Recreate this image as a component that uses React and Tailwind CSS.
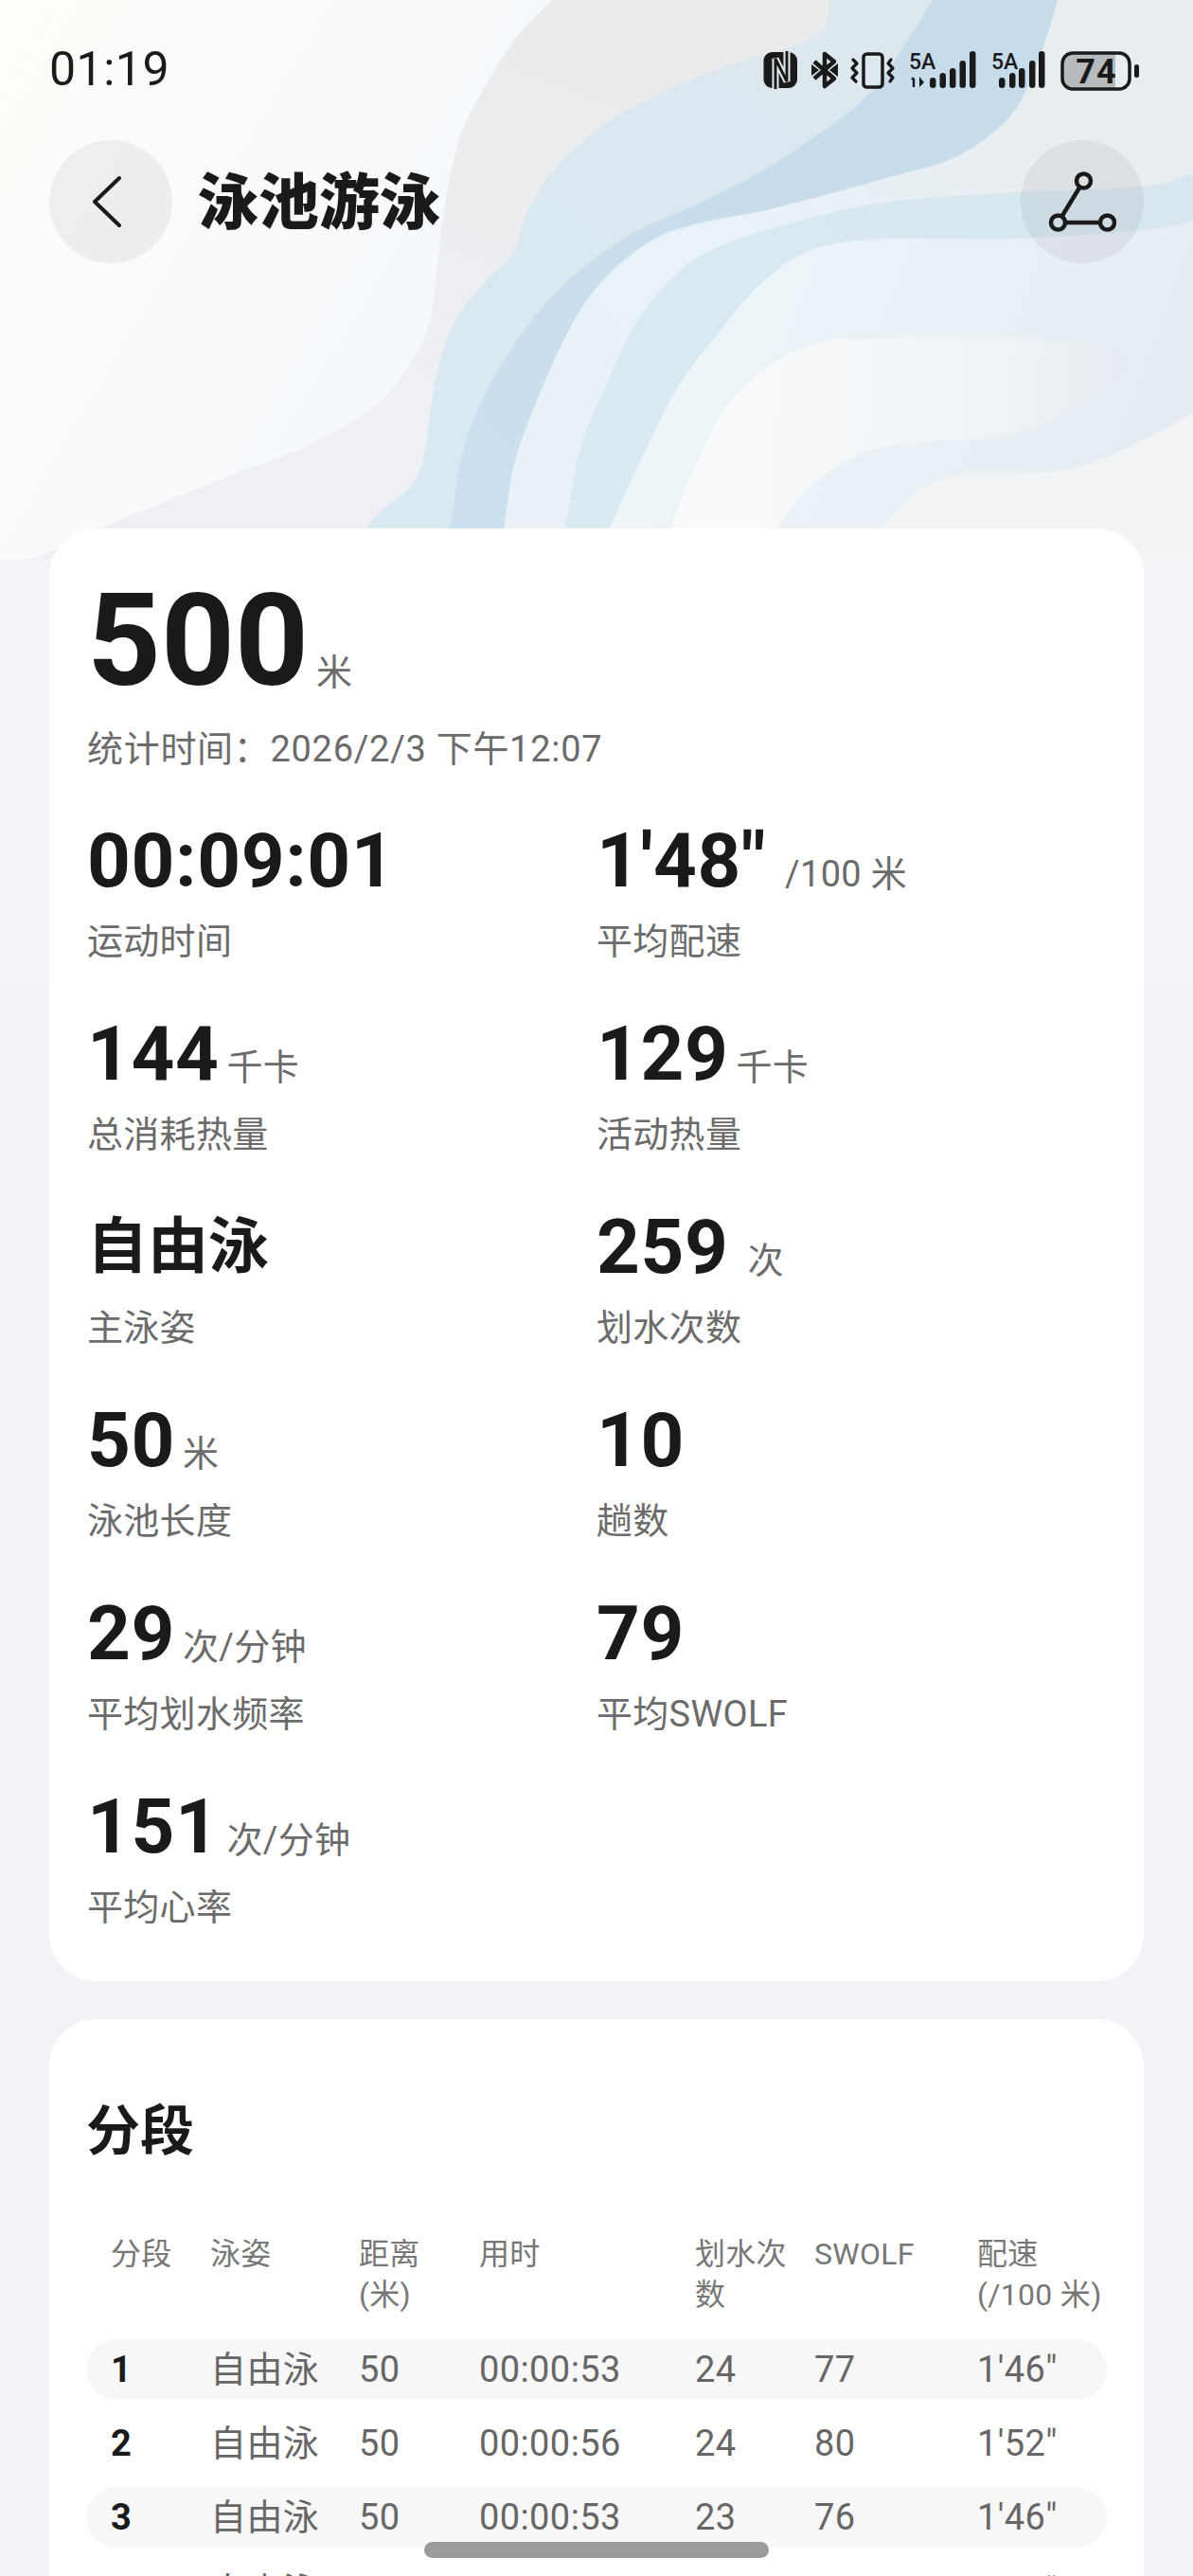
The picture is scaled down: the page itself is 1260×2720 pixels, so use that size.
import React from 'react';

const stats = [
  { value: '00:09:01', label: '运动时间' },
  { value: '1\'48"', unit: '/100 米', wide: true, label: '平均配速' },
  { value: '144', unit: '千卡', label: '总消耗热量' },
  { value: '129', unit: '千卡', label: '活动热量' },
  { value: '自由泳', label: '主泳姿', cjk: true },
  { value: '259', unit: '次', wide: true, label: '划水次数' },
  { value: '50', unit: '米', label: '泳池长度' },
  { value: '10', label: '趟数' },
  { value: '29', unit: '次/分钟', label: '平均划水频率' },
  { value: '79', label: '平均SWOLF' },
  { value: '151', unit: '次/分钟', label: '平均心率' },
];

const headers = [['分段'], ['泳姿'], ['距离', '(米)'], ['用时'], ['划水次', '数'], ['SWOLF'], ['配速', '(/100 米)']];

const laps = [
  ['1', '自由泳', '50', '00:00:53', '24', '77', '1\'46"'],
  ['2', '自由泳', '50', '00:00:56', '24', '80', '1\'52"'],
  ['3', '自由泳', '50', '00:00:53', '23', '76', '1\'46"'],
  ['4', '自由泳', '50', '00:00:54', '24', '78', '1\'48"'],
];

// catmull-rom through the points, so the wave edges stay soft
function smooth(pts) {
  let d = `M${pts[0][0]} ${pts[0][1]}`;
  for (let i = 0; i < pts.length - 1; i++) {
    const p0 = pts[i - 1] || pts[i];
    const p1 = pts[i];
    const p2 = pts[i + 1];
    const p3 = pts[i + 2] || p2;
    const c1x = p1[0] + (p2[0] - p0[0]) / 6;
    const c1y = p1[1] + (p2[1] - p0[1]) / 6;
    const c2x = p2[0] - (p3[0] - p1[0]) / 6;
    const c2y = p2[1] - (p3[1] - p1[1]) / 6;
    d += ` C${c1x} ${c1y} ${c2x} ${c2y} ${p2[0]} ${p2[1]}`;
  }
  return d;
}

const fromTop = ' L1260 620 L1260 0 Z';
const fromSide = ' L1260 620 Z';

const grayEdge = [[583, 0], [545, 40], [513, 90], [485, 147], [468, 227], [462, 280], [455, 333], [440, 373], [400, 425], [333, 467], [267, 493], [200, 520], [90, 565], [0, 610], [0, 620]];
const blueEdge = [[876, 0], [862, 38], [767, 70], [700, 97], [640, 130], [587, 177], [557, 223], [542, 267], [513, 297], [480, 340], [460, 400], [442, 500], [395, 547], [335, 620]];
const deepEdge = [[985, 0], [960, 40], [920, 97], [867, 140], [800, 183], [733, 217], [667, 247], [607, 290], [560, 340], [517, 407], [490, 473], [475, 560], [467, 620]];
const paleEdge = [[1117, 0], [1105, 40], [1083, 97], [1057, 133], [1007, 167], [940, 187], [817, 220], [733, 237], [683, 257], [633, 300], [600, 350], [567, 423], [543, 490], [532, 560], [524, 620]];
const stripEdge = [[1260, 183], [1207, 197], [1073, 203], [940, 213], [857, 230], [767, 257], [717, 287], [673, 340], [640, 407], [613, 473], [597, 560], [588, 620]];
const lightEdge = [[1260, 233], [1207, 243], [1073, 252], [920, 253], [850, 267], [800, 303], [760, 350], [717, 407], [683, 473], [643, 560], [622, 620]];
const whiteEdge = [[690, 620], [717, 533], [740, 480], [767, 430], [807, 390], [860, 363], [920, 358], [1073, 357], [1190, 372], [1157, 417], [1073, 457], [973, 467], [907, 480], [840, 530], [790, 620]];
const lowEdge = [[1260, 437], [1140, 493], [1023, 500], [973, 517], [927, 560], [880, 620]];

function HeroBackground() {
  return (
    <svg className="absolute left-0 top-0" width="1260" height="1040" viewBox="0 0 1260 1040">
      <defs>
        <linearGradient id="base" gradientUnits="userSpaceOnUse" x1="0" y1="0" x2="560" y2="340">
          <stop offset="0" stopColor="#fffef8" />
          <stop offset="0.25" stopColor="#fbfbfa" />
          <stop offset="1" stopColor="#f4f8fc" />
        </linearGradient>
        <linearGradient id="gray" gradientUnits="userSpaceOnUse" x1="560" y1="60" x2="420" y2="420">
          <stop offset="0" stopColor="#e9ebed" />
          <stop offset="1" stopColor="#eff0f3" />
        </linearGradient>
        <linearGradient id="blue" gradientUnits="userSpaceOnUse" x1="800" y1="60" x2="440" y2="540">
          <stop offset="0" stopColor="#dce7ee" />
          <stop offset="1" stopColor="#d8e9f2" />
        </linearGradient>
        <linearGradient id="deep" gradientUnits="userSpaceOnUse" x1="1000" y1="60" x2="500" y2="540">
          <stop offset="0" stopColor="#c6dcea" />
          <stop offset="1" stopColor="#cbe0ee" />
        </linearGradient>
        <linearGradient id="pale" gradientUnits="userSpaceOnUse" x1="1100" y1="120" x2="560" y2="540">
          <stop offset="0" stopColor="#e8edf0" />
          <stop offset="0.5" stopColor="#e9f2f8" />
          <stop offset="1" stopColor="#e9f1f6" />
        </linearGradient>
        <linearGradient id="strip" gradientUnits="userSpaceOnUse" x1="1200" y1="220" x2="620" y2="540">
          <stop offset="0" stopColor="#d8e6ee" />
          <stop offset="1" stopColor="#d9eaf3" />
        </linearGradient>
        <linearGradient id="light" gradientUnits="userSpaceOnUse" x1="760" y1="300" x2="1240" y2="480">
          <stop offset="0" stopColor="#eef5f9" />
          <stop offset="1" stopColor="#e4ebf2" />
        </linearGradient>
        <linearGradient id="white" gradientUnits="userSpaceOnUse" x1="760" y1="400" x2="1180" y2="420">
          <stop offset="0" stopColor="#f8fafc" />
          <stop offset="0.7" stopColor="#f0f3f5" />
          <stop offset="1" stopColor="#e6ecf2" />
        </linearGradient>
      </defs>
      <rect width="1260" height="1040" fill="url(#base)" />
      <path d={smooth(grayEdge) + fromTop} fill="url(#gray)" />
      <path d={smooth(blueEdge) + fromTop} fill="url(#blue)" />
      <path d={smooth(deepEdge) + fromTop} fill="url(#deep)" />
      <path d={smooth(paleEdge) + fromTop} fill="url(#pale)" />
      <path d={smooth(stripEdge) + fromSide} fill="url(#strip)" />
      <path d={smooth(lightEdge) + fromSide} fill="url(#light)" />
      <path d={smooth(whiteEdge) + ' Z'} fill="url(#white)" />
      <path d={smooth(lowEdge) + fromSide} fill="#f1f3f5" />
      <rect y="590" width="1260" height="450" fill="#f3f4f7" />
    </svg>
  );
}

function StatusIcons() {
  const tops = [82, 77, 72, 64, 54];
  const sim1 = [982, 992.5, 1003, 1013.5, 1024];
  const sim2 = [1055, 1066, 1076, 1087, 1097];
  return (
    <svg width="400" height="44" viewBox="805 53 400 44" className="block shrink-0" fill="#1a1a1a">
      {/* nfc */}
      <rect x="806.5" y="55" width="35.5" height="38" rx="9" />
      <path d="M819 94 V62 L831 86 V54" fill="none" stroke="#e3edf2" strokeWidth="7" />
      <path d="M819 94 V62 L831 86 V54" fill="none" stroke="#1a1a1a" strokeWidth="3" />
      {/* bluetooth */}
      <path d="M860 65 L881 83 L871 91 V57 L881 65 L860 83" fill="none" stroke="#1a1a1a" strokeWidth="4.5" strokeLinejoin="round" />
      <path d="M876 74 L885 67 V81 Z" />
      <path d="M857 68 L865 74 L857 80 Z" />
      {/* vibrate */}
      <rect x="912" y="57" width="20" height="35" rx="3.5" fill="none" stroke="#1a1a1a" strokeWidth="3.5" />
      <path d="M901 63 L905 67 L900 72 L905 77 L900 82 L904 86" fill="none" stroke="#1a1a1a" strokeWidth="3.2" strokeLinecap="round" strokeLinejoin="round" />
      <path d="M941 63 L938 67 L943 72 L938 77 L943 82 L940 86" fill="none" stroke="#1a1a1a" strokeWidth="3.2" strokeLinecap="round" strokeLinejoin="round" />
      {/* first sim */}
      <text x="960" y="73" fontFamily="Roboto, sans-serif" fontSize="23" fontWeight="500" fill="#1a1a1a">5A</text>
      <path d="M965 83 V92 M963 84 L965 82" fill="none" stroke="#1a1a1a" strokeWidth="2.4" />
      <path d="M971 81 V92 L976 87 Z" />
      {tops.map((top, i) => (
        <rect key={i} x={sim1[i]} y={top} width="6.5" height={93 - top} rx="3.2" />
      ))}
      {/* second sim */}
      <text x="1047" y="73" fontFamily="Roboto, sans-serif" fontSize="23" fontWeight="500" fill="#1a1a1a">5A</text>
      {tops.map((top, i) => (
        <rect key={i} x={sim2[i]} y={top} width="6.5" height={93 - top} rx="3.2" />
      ))}
      {/* battery */}
      <path d="M1132 56 H1178 V94 H1132 A10 10 0 0 1 1122 84 V66 A10 10 0 0 1 1132 56 Z" fill="#b6bbbe" />
      <rect x="1122" y="56" width="71" height="38" rx="11" fill="none" stroke="#1a1a1a" strokeWidth="3.5" />
      <rect x="1198" y="68" width="5" height="14" rx="2.5" />
      <text x="1158" y="88" textAnchor="middle" fontFamily="Roboto, sans-serif" fontSize="36" fontWeight="700" letterSpacing="1" fill="#1a1a1a">74</text>
    </svg>
  );
}

function Stat({ value, unit, label, cjk, wide }) {
  return (
    <div>
      <div className="flex h-[84px] items-baseline">
        <span className={`leading-[84px] font-bold text-[#1a1a1a] ${cjk ? 'text-[64px]' : 'text-[80px] tracking-[0.6px]'}`}>{value}</span>
        {unit && <span className={`text-[38px] tracking-[0.3px] text-[#6b6b6b] ${wide ? 'ml-5' : 'ml-2'}`}>{unit}</span>}
      </div>
      <div className="mt-[21px] text-[38px] leading-[44px] tracking-[0.3px] text-[#6b6b6b]">{label}</div>
    </div>
  );
}

export default function App() {
  return (
    <div className="relative h-[2720px] w-[1260px] overflow-hidden bg-[#f1f3f6] font-['Roboto','Noto_Sans_CJK_SC',sans-serif]">
      <HeroBackground />

      <div className="relative flex flex-col px-[52px]">
        {/* status bar */}
        <div className="flex h-[148px] items-start justify-between pt-[43px]">
          <span className="text-[50px] leading-[60px] tracking-[0.5px] text-[#1a1a1a]">01:19</span>
          <div className="mr-[3px] mt-[10px]"><StatusIcons /></div>
        </div>

        {/* header */}
        <div className="flex h-[130px] items-center justify-between">
          <div className="flex items-center">
            <button className="flex h-[130px] w-[130px] items-center justify-center rounded-full bg-black/5">
              <svg className="-ml-2" width="32" height="56" viewBox="0 0 32 56" fill="none" stroke="#1a1a1a" strokeWidth="4" strokeLinecap="round" strokeLinejoin="round">
                <path d="M29 3 L3 28 L29 53" />
              </svg>
            </button>
            <h1 className="ml-[27px] mt-1 text-[64px] leading-[80px] font-black text-[#1a1a1a]">泳池游泳</h1>
          </div>
          <button className="flex h-[130px] w-[130px] items-center justify-center rounded-full bg-black/5">
            <svg width="72" height="68" viewBox="0 0 72 68" fill="none" stroke="#1a1a1a" strokeWidth="4.5">
              <circle cx="37.5" cy="12" r="7.5" />
              <circle cx="10.5" cy="56" r="7.5" />
              <circle cx="62.5" cy="56" r="7.5" />
              <path d="M33.5 18.5 L14.5 49.5 M18 56 H55" />
            </svg>
          </button>
        </div>

        {/* summary card */}
        <div className="mt-[280px] h-[1534px] rounded-[50px] bg-white px-10 pt-[49px]">
          <div className="flex h-[140px] items-baseline">
            <span className="text-[136px] leading-[140px] font-bold text-[#1a1a1a]">500</span>
            <span className="ml-2 text-[38px] text-[#6b6b6b]">米</span>
          </div>
          <div className="mt-[22px] text-[38px] leading-[44px] tracking-[0.7px] text-[#6b6b6b]">统计时间：2026/2/3 下午12:07</div>

          <div className="mt-[54px] grid grid-cols-[538px_1fr] gap-y-[55px]">
            {stats.map((s) => (
              <Stat key={s.label} {...s} />
            ))}
          </div>
        </div>

        {/* laps card */}
        <div className="mt-10 rounded-[50px] bg-white px-[39px] pt-[87px] pb-10">
          <h2 className="text-[57px] leading-[64px] font-bold text-[#1a1a1a]">分段</h2>

          <div className="mt-[76px] grid grid-cols-[105px_157px_127px_228px_126px_172px_1fr] pl-[26px] text-[32px] leading-[43px] tracking-[0.3px] text-[#777777]">
            {headers.map((lines) => (
              <div key={lines[0]} className="whitespace-nowrap">
                {lines.map((line) => (
                  <div key={line}>{line}</div>
                ))}
              </div>
            ))}
          </div>

          <div className="mt-[25px] flex flex-col gap-[14px]">
            {laps.map((lap, i) => (
              <div
                key={lap[0]}
                className={`grid h-16 grid-cols-[105px_157px_127px_228px_126px_172px_1fr] items-center rounded-[32px] pl-[26px] text-[38px] tracking-[0.4px] text-[#666666] ${i % 2 === 0 ? 'bg-[#f7f7f7]' : ''}`}
              >
                <span className="font-bold text-[#1a1a1a]">{lap[0]}</span>
                {lap.slice(1).map((cell, j) => (
                  <span key={j}>{cell}</span>
                ))}
              </div>
            ))}
          </div>
        </div>
      </div>

      {/* home indicator */}
      <div className="absolute left-[448px] top-[2684px] h-[17px] w-[364px] rounded-full bg-[#9b9b9b]" />
    </div>
  );
}
